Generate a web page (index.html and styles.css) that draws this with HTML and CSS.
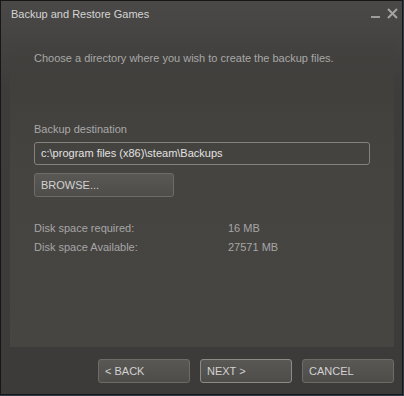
FILE: index.html
```html
<!DOCTYPE html>
<html>
<head>
<meta charset="utf-8">
<link rel="stylesheet" href="styles.css">
</head>
<body>
<div class="window">
  <div class="titlebar">
    <span class="title">Backup and Restore Games</span>
    <div class="controls">
      <svg class="min" width="10" height="10" viewBox="0 0 10 10"><rect x="0" y="8" width="9" height="2" fill="#9c9c9c"/></svg>
      <svg class="close" width="11" height="11" viewBox="0 0 11 11"><path d="M1 1 L10 10 M10 1 L1 10" stroke="#a4a4a4" stroke-width="2"/></svg>
    </div>
  </div>
  <div class="panel">
    <p class="intro">Choose a directory where you wish to create the backup files.</p>
    <p class="label">Backup destination</p>
    <div class="field">c:\program files (x86)\steam\Backups</div>
    <div class="btn browse">BROWSE...</div>
    <div class="stats">
      <div class="row"><span class="key">Disk space required:</span><span class="val">16 MB</span></div>
      <div class="row"><span class="key">Disk space Available:</span><span class="val">27571 MB</span></div>
    </div>
  </div>
  <div class="footer">
    <div class="btn">&lt; BACK</div>
    <div class="btn default">NEXT &gt;</div>
    <div class="btn">CANCEL</div>
  </div>
</div>
</body>
</html>
```

FILE: styles.css
```css
html, body {
  margin: 0;
  padding: 0;
}
body {
  background: #2c3b47;
  width: 404px;
  height: 396px;
  font-family: "Liberation Sans", Arial, sans-serif;
  font-size: 11px;
  line-height: 13px;
}
.window {
  width: 401px;
  height: 393px;
  border: 1px solid #171717;
  background: linear-gradient(to bottom, #4a4947 0px, #3d3c3a 90px, #3c3b39 100%);
  display: flex;
  flex-direction: column;
}
.titlebar {
  height: 31px;
  display: flex;
  justify-content: space-between;
  align-items: flex-start;
  padding: 0 4px 0 10px;
}
.title {
  color: #d4d4d4;
  margin-top: 7px;
}
.controls {
  display: flex;
  align-items: flex-start;
  gap: 6px;
  margin-top: 7px;
}
.min {
  margin-top: 0px;
}
.panel {
  margin: 0 8px 0 9px;
  height: 315px;
  background: linear-gradient(to bottom, rgba(70,68,65,0) 0px, #42403d 60px, #464441 140px, #474542 100%);
  padding: 20px 24px 0 24px;
  box-sizing: border-box;
}
.intro {
  margin: 0;
  color: #a8a8a8;
}
.label {
  margin: 58px 0 0 0;
  color: #a8a8a8;
}
.field {
  margin-top: 6px;
  width: 336px;
  height: 23px;
  box-sizing: border-box;
  border: 1px solid #85827e;
  border-radius: 3px;
  padding: 4px 6px;
  color: #e2e2e2;
}
.btn {
  box-sizing: border-box;
  height: 24px;
  border: 1px solid #6f6c68;
  border-radius: 3px;
  background: linear-gradient(to bottom, #5a5855 0%, #4f4d4a 100%);
  color: #d2d2d2;
  padding: 5px 6px;
}
.browse {
  margin-top: 8px;
  width: 140px;
}
.stats {
  margin-top: 25px;
  display: flex;
  flex-direction: column;
  gap: 6px;
  color: #a6a6a6;
}
.row {
  display: flex;
}
.key {
  width: 194px;
}
.footer {
  display: flex;
  justify-content: flex-end;
  gap: 10px;
  padding: 12px 8px 0 0;
}
.footer .btn {
  width: 92px;
}
.footer .btn.default {
  border-color: #8e8b87;
}
```
